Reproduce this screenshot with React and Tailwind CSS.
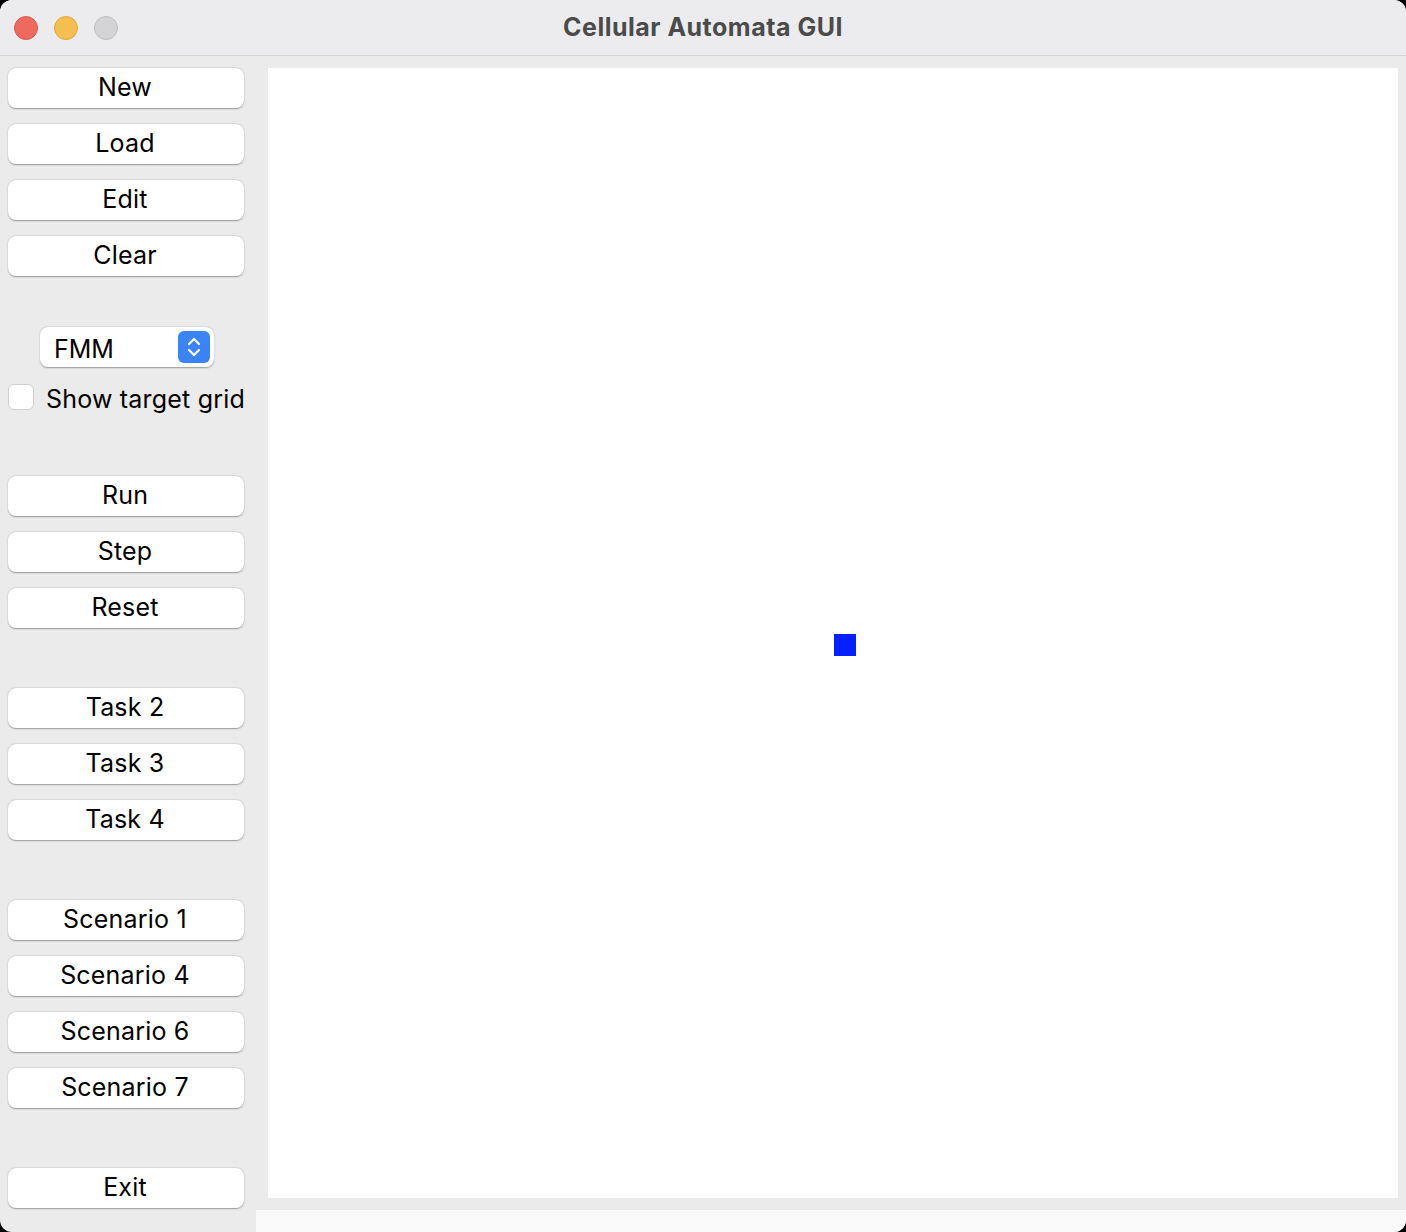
import React from 'react'

const font = { fontFamily: 'Inter, "Liberation Sans", sans-serif' }

function Btn({ label, className = '' }) {
  return (
    <button
      type="button"
      className={`flex h-10 w-[236px] items-center justify-center rounded-[8px] bg-white pb-[2px] pr-[2px] text-[25px] leading-none tracking-[0.2px] text-black shadow-[0_0.5px_1.5px_rgba(0,0,0,0.35)] ${className}`}
    >
      {label}
    </button>
  )
}

function Light({ cls }) {
  return <span className={`h-6 w-6 rounded-full border ${cls}`} />
}

export default function App() {
  return (
    <div className="h-[1232px] w-[1406px] bg-black" style={font}>
      <div className="flex h-full w-full flex-col overflow-hidden rounded-[12px] bg-[#ebebeb]">
        {/* title bar */}
        <div className="relative flex h-[56px] items-center border-b border-[#d4d4d4] bg-[#ececee]">
          <div className="flex items-center gap-4 pl-[14px]">
            <Light cls="border-[#d9574c] bg-[#ef6a5e]" />
            <Light cls="border-[#dda63f] bg-[#f5bf4f]" />
            <Light cls="border-[#bdbdbf] bg-[#d4d4d6]" />
          </div>
          <div className="pointer-events-none absolute inset-x-0 top-0 flex h-full items-center justify-center text-[25px] font-bold tracking-[0.5px] text-[#4b4b4b]">
            Cellular Automata GUI
          </div>
        </div>

        <div className="flex flex-1">
          {/* left panel */}
          <div className="flex w-[256px] flex-col pl-2 pt-3">
            <div className="flex flex-col gap-4">
              <Btn label="New" />
              <Btn label="Load" />
              <Btn label="Edit" />
              <Btn label="Clear" />
            </div>

            <div className="mt-[51px] ml-8 flex h-10 w-[174px] items-center justify-between rounded-[8px] bg-white pl-[14px] pr-1 shadow-[0_0.5px_1.5px_rgba(0,0,0,0.35)]">
              <span className="pt-1 text-[25px] leading-none text-black">FMM</span>
              <span className="flex h-8 w-8 items-center justify-center rounded-[6px] bg-[#3b84f6]">
                <svg width="16" height="22" viewBox="0 0 16 22" fill="none" stroke="white" strokeWidth="2.2" strokeLinecap="round" strokeLinejoin="round">
                  <path d="M3 8 L8 3 L13 8" />
                  <path d="M3 14 L8 19 L13 14" />
                </svg>
              </span>
            </div>

            <label className="mt-[17px] flex h-[26px] items-center gap-3">
              <span className="h-[26px] w-[26px] shrink-0 rounded-[6px] border border-[#d0d0d0] bg-white" />
              <span className="whitespace-nowrap pt-1 text-[25px] leading-none tracking-[0.2px] text-black">Show target grid</span>
            </label>

            <div className="mt-[66px] flex flex-col gap-4">
              <Btn label="Run" />
              <Btn label="Step" />
              <Btn label="Reset" />
            </div>

            <div className="mt-[60px] flex flex-col gap-4">
              <Btn label="Task 2" />
              <Btn label="Task 3" />
              <Btn label="Task 4" />
            </div>

            <div className="mt-[60px] flex flex-col gap-4">
              <Btn label="Scenario 1" />
              <Btn label="Scenario 4" />
              <Btn label="Scenario 6" />
              <Btn label="Scenario 7" />
            </div>

            <div className="mt-[60px]">
              <Btn label="Exit" />
            </div>
          </div>

          {/* canvas area */}
          <div className="flex flex-1 flex-col pt-3">
            <div className="relative ml-3 h-[1130px] w-[1130px] bg-white">
              <div className="absolute left-[566px] top-[566px] h-[22px] w-[22px] bg-[#0420ff]" />
            </div>
            <div className="mt-3 h-[22px] bg-[#f9f9f9]" />
          </div>
        </div>
      </div>
    </div>
  )
}
